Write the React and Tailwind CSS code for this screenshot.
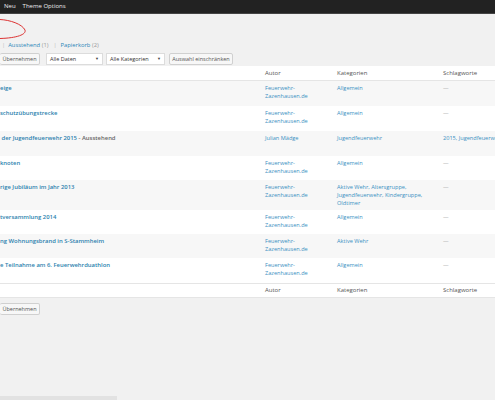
const rows = [
  { h: 25, title: "eige", author: ["Feuerwehr-", "Zazenhausen.de"], cats: ["Allgemein"], tags: "—" },
  { h: 25, title: "schutzübungstrecke", author: ["Feuerwehr-", "Zazenhausen.de"], cats: ["Allgemein"], tags: "—" },
  { h: 25, title: " der Jugendfeuerwehr 2015", state: " - Ausstehend", author: ["Julian Mädge"], cats: ["Jugendfeuerwehr"], tags: "2015, Jugendfeuerwehr" },
  { h: 24, title: "knoten", author: ["Feuerwehr-", "Zazenhausen.de"], cats: ["Allgemein"], tags: "—" },
  { h: 30, title: "rige Jubiläum im Jahr 2013", author: ["Feuerwehr-", "Zazenhausen.de"], cats: ["Aktive Wehr, Altersgruppe,", "Jugendfeuerwehr, Kindergruppe,", "Oldtimer"], tags: "—" },
  { h: 24, title: "tversammlung 2014", author: ["Feuerwehr-", "Zazenhausen.de"], cats: ["Allgemein"], tags: "—" },
  { h: 24, title: "ng Wohnungsbrand in S-Stammheim", author: ["Feuerwehr-", "Zazenhausen.de"], cats: ["Aktive Wehr"], tags: "—" },
  { h: 25, title: "e Teilnahme am 6. Feuerwehrduathlon", author: ["Feuerwehr-", "Zazenhausen.de"], cats: ["Allgemein"], tags: "—" },
]

function Button({ children, className = "" }) {
  return (
    <div className={"h-[12px] flex items-center justify-center border border-[#d0d0d0] bg-[#f7f7f7] rounded-[2px] text-[5.5px] text-[#555] " + className}>
      {children}
    </div>
  )
}

function Select({ children, className = "" }) {
  return (
    <div className={"h-[12px] flex items-center justify-between border border-[#dcdcdc] bg-white pl-[3px] pr-[3px] text-[5.5px] text-[#333] " + className}>
      <span>{children}</span>
      <span className="text-[4px] text-[#444]">▼</span>
    </div>
  )
}

function HeaderRow({ border }) {
  return (
    <div className={"grid grid-cols-[265px_72px_106px_1fr] h-[15px] items-center bg-white text-[6px] text-[#555] " + border}>
      <div />
      <div>Autor</div>
      <div>Kategorien</div>
      <div>Schlagworte</div>
    </div>
  )
}

export default function App() {
  return (
    <div className="relative w-[495px] h-[400px] overflow-hidden bg-[#f1f1f1] flex flex-col font-['Open_Sans',sans-serif]">

      {/* Admin bar */}
      <div className="h-[14px] bg-[#222] border-b border-[#444] flex items-center gap-[7px] pl-[4px] text-[6px] text-[#eee]">
        <span>Neu</span>
        <span>Theme Options</span>
      </div>

      {/* Hand-drawn red mark */}
      <svg className="absolute left-0 top-0" width="40" height="44" viewBox="0 0 40 44">
        <path d="M0 19.5 C10 20 22 24 25 30 C26.5 34.5 17 38 0 38.5" fill="none" stroke="#d33" strokeWidth="1" />
      </svg>

      {/* Status links */}
      <div className="mt-[28px] h-[8px] flex items-center gap-[3px] pl-[2px] text-[5.8px] leading-none whitespace-nowrap">
        <span className="text-[#bbb]">|</span>
        <span className="text-[#2a86b8]">Ausstehend <span className="text-[#999]">(1)</span></span>
        <span className="text-[#bbb] ml-[2px]">|</span>
        <span className="text-[#2a86b8] ml-[1px]">Papierkorb <span className="text-[#999]">(2)</span></span>
      </div>

      {/* Filters */}
      <div className="mt-[3px] flex items-center">
        <Button className="w-[40px] border-l-0">Übernehmen</Button>
        <Select className="w-[57px] ml-[6px]">Alle Daten</Select>
        <Select className="w-[59px] ml-[3px]">Alle Kategorien</Select>
        <Button className="w-[64px] ml-[4px]">Auswahl einschränken</Button>
      </div>

      {/* Table */}
      <div className="mt-[1px] bg-white">
        <HeaderRow border="border-b border-[#e5e5e5]" />
        {rows.map((r, i) => (
          <div
            key={i}
            className={"grid grid-cols-[265px_72px_106px_1fr] pt-[3px] text-[5.6px] leading-[8px] " + (i % 2 === 0 ? "bg-[#f7f7f7]" : "bg-white")}
            style={{ height: r.h }}
          >
            <div className="whitespace-pre text-[5.9px] font-semibold text-[#2a7fae]">
              {r.title}
              {r.state && <span className="text-[#666]">{r.state}</span>}
            </div>
            <div className="text-[#3a90c2]">
              {r.author.map((a) => <div key={a}>{a}</div>)}
            </div>
            <div className="text-[#3a90c2]">
              {r.cats.map((c) => <div key={c} className="whitespace-nowrap">{c}</div>)}
            </div>
            <div className={"whitespace-nowrap " + (r.tags === "—" ? "text-[#aaa]" : "text-[#3a90c2]")}>{r.tags}</div>
          </div>
        ))}
        <HeaderRow border="border-t border-[#e5e5e5] border-b" />
      </div>

      {/* Bottom bulk action */}
      <div className="mt-[5px] flex">
        <Button className="w-[40px] border-l-0">Übernehmen</Button>
      </div>

      {/* Scroll bar remnant */}
      <div className="mt-auto h-[4px] w-[117px] bg-[#e2e2e2]" />
    </div>
  )
}
